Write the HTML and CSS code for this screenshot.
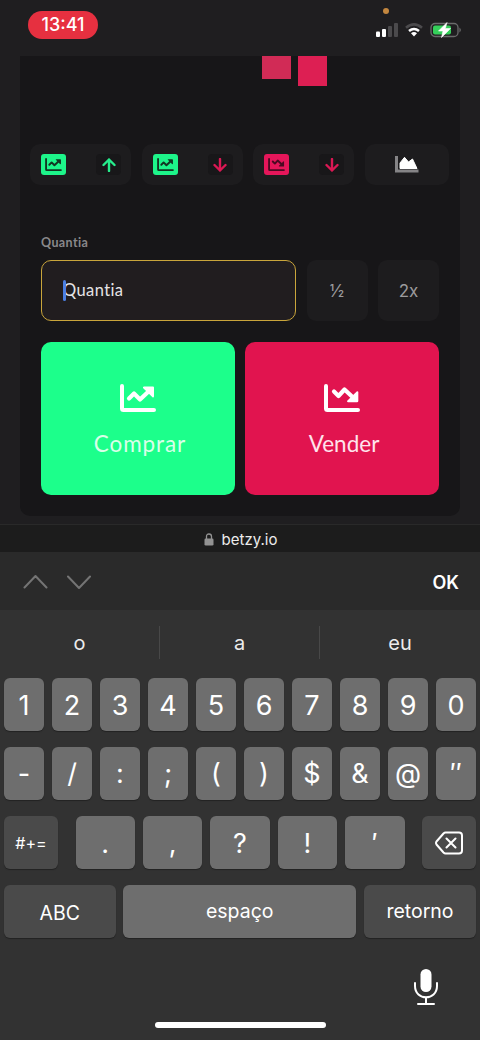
FILE: index.html
```html
<!DOCTYPE html>
<html lang="pt">
<head>
<meta charset="utf-8">
<title>betzy.io</title>
<link rel="stylesheet" href="styles.css">
</head>
<body>
<svg class="defs" aria-hidden="true">
  <symbol id="up" viewBox="0 0 36 28">
    <path d="M2 2V24.5Q2 26 3.500 26H34" fill="none" stroke="currentColor" stroke-width="4" stroke-linecap="round"/>
    <path d="M9 14.500L14 9.500L20 15.500L28 8" fill="none" stroke="currentColor" stroke-width="4.200" stroke-linecap="round" stroke-linejoin="round"/>
    <path d="M24 2.500H33Q34 2.500 34 3.500V12.500Q33.500 14 32.500 13.200L23 4Q22.500 2.800 24 2.500Z" fill="currentColor"/>
  </symbol>
  <symbol id="down" viewBox="0 0 36 28">
    <path d="M2 2V24.500Q2 26 3.500 26H34" fill="none" stroke="currentColor" stroke-width="4" stroke-linecap="round"/>
    <path d="M10 7.500L14.500 12L20.500 5.500L28 12.500" fill="none" stroke="currentColor" stroke-width="4.200" stroke-linecap="round" stroke-linejoin="round"/>
    <path d="M24 18.300H33Q34.300 18.300 34.300 17V8Q34 6.800 32.700 7.500L23.200 16.700Q22.500 18 24 18.300Z" fill="currentColor"/>
  </symbol>
  <symbol id="arrow" viewBox="0 0 14 14">
    <path d="M7 13V1.500M1.500 7L7 1.500L12.500 7" fill="none" stroke="currentColor" stroke-width="2.400" stroke-linecap="round" stroke-linejoin="round"/>
  </symbol>
</svg>

<header class="status">
  <span class="clock">13:41</span>
  <div class="indicators">
    <i class="mic-dot"></i>
    <svg width="22" height="14" viewBox="0 0 22 14"><rect y="8.500" width="4" height="5.500" rx="1" fill="#fff"/><rect x="6" y="6" width="4" height="8" rx="1" fill="#fff"/><rect x="12" y="3" width="4" height="11" rx="1" fill="#4b4a4c"/><rect x="18" width="4" height="14" rx="1" fill="#4b4a4c"/></svg>
    <svg class="wifi" width="18" height="14" viewBox="0 0 18 14" fill="none"><path d="M1 4.800Q9-2 17 4.800" stroke="#4b4a4c" stroke-width="2.600"/><path d="M4 8Q9 4 14 8" stroke="#fff" stroke-width="2.600"/><path d="M6 10.200Q9 8 12 10.200L9 13.500Z" fill="#fff"/></svg>
    <svg class="battery" width="32" height="16" viewBox="0 0 32 16"><rect x="1" y="1.500" width="27" height="13" rx="4" fill="none" stroke="#6b6b6c" stroke-width="1.300"/><rect x="3" y="3.500" width="18" height="9" rx="2" fill="#35cf5a"/><path d="M29.500 5.500Q32 8 29.500 10.500Z" fill="#777"/><path d="M17 .5L8.500 9H13L11.500 15.500L20.500 6.500H15.300Z" fill="#fff" stroke="#fff" stroke-width=".6" stroke-linejoin="round"/></svg>
  </div>
</header>

<main class="panel">
  <div class="candles"><i class="candle"></i><i class="candle tall"></i></div>
  <div class="signals">
    <div class="signal green"><span class="badge"><svg><use href="#up"/></svg></span><span class="dir"><svg><use href="#arrow"/></svg></span></div>
    <div class="signal green"><span class="badge"><svg><use href="#up"/></svg></span><span class="dir falling"><svg><use href="#arrow"/></svg></span></div>
    <div class="signal red"><span class="badge"><svg><use href="#down"/></svg></span><span class="dir falling"><svg><use href="#arrow"/></svg></span></div>
    <div class="signal area"><svg width="24" height="19" viewBox="0 0 24 19"><path d="M1.500 1V16H23.500" fill="none" stroke="#858486" stroke-width="3"/><path d="M5 13.500V8L9.500 2.300L13.500 7L17.500 4L22 13.500Z" fill="#fff" stroke="#fff" stroke-linejoin="round"/></svg></div>
  </div>
  <label class="label" for="amount">Quantia</label>
  <div class="amount">
    <div class="field" id="amount"><i class="caret"></i><span>Quantia</span></div>
    <button class="step">½</button>
    <button class="step">2x</button>
  </div>
  <div class="trade">
    <button class="action buy"><svg><use href="#up"/></svg><span>Comprar</span></button>
    <button class="action sell"><svg><use href="#down"/></svg><span>Vender</span></button>
  </div>
</main>

<div class="url">
  <svg width="10" height="13" viewBox="0 0 10 13"><rect x=".5" y="5.500" width="9" height="7" rx="1.300" fill="#929292"/><path d="M2.500 6V3.500Q2.500 1 5 1T7.500 3.500V6" fill="none" stroke="#929292" stroke-width="1.300"/></svg>
  <span>betzy.io</span>
</div>
<div class="toolbar">
  <svg width="68" height="16" viewBox="0 0 68 16" fill="none" stroke="#747474" stroke-width="2" stroke-linecap="round" stroke-linejoin="round"><path d="M1.500 13.500L12.500 2L23.500 13.500M45 2.500L56 14L67 2.500"/></svg>
  <b>OK</b>
</div>

<section class="keyboard">
  <div class="suggestions"><span>o</span><span>a</span><span>eu</span></div>
  <div class="keys">
    <div class="row"><kbd>1</kbd><kbd>2</kbd><kbd>3</kbd><kbd>4</kbd><kbd>5</kbd><kbd>6</kbd><kbd>7</kbd><kbd>8</kbd><kbd>9</kbd><kbd>0</kbd></div>
    <div class="row signs"><kbd>-</kbd><kbd>/</kbd><kbd>:</kbd><kbd>;</kbd><kbd>(</kbd><kbd>)</kbd><kbd>$</kbd><kbd>&amp;</kbd><kbd>@</kbd><kbd>″</kbd></div>
    <div class="row punctuation">
      <kbd class="dark symbols">#+=</kbd>
      <div class="middle"><kbd>.</kbd><kbd>,</kbd><kbd>?</kbd><kbd>!</kbd><kbd>′</kbd></div>
      <kbd class="dark"><svg width="28" height="24" viewBox="0 0 28 24" fill="none" stroke="#fff" stroke-width="2" stroke-linecap="round" stroke-linejoin="round"><path d="M10.500 1.500H24Q27 1.500 27 4.500V19.500Q27 22.500 24 22.500H10.500Q9.500 22.500 8.500 21.500L1.500 13.500Q.5 12 1.500 10.500L8.500 2.500Q9.500 1.500 10.500 1.500ZM11.500 7.500L20.500 16.500M20.500 7.500L11.500 16.500"/></svg></kbd>
    </div>
    <div class="row bottom"><kbd class="dark abc">ABC</kbd><kbd class="word">espaço</kbd><kbd class="dark word">retorno</kbd></div>
  </div>
  <div class="dictation"><svg width="26" height="38" viewBox="0 0 26 38" fill="none" stroke="#fff" stroke-width="2" stroke-linecap="round"><rect x="7.500" y="1" width="11" height="23" rx="5.500" fill="#fff" stroke="none"/><path d="M2 15V18C2 33 24 33 24 18V15M13 30V36M5 36H21"/></svg></div>
  <div class="home"></div>
</section>
</body>
</html>
```
FILE: styles.css
```css
* { box-sizing: border-box; }
body {
  margin: 0;
  width: 480px;
  height: 1040px;
  overflow: hidden;
  background: #1f1e20;
  color: #fff;
  font-family: Inter, "Liberation Sans", sans-serif;
}
svg { display: block; flex: none; }
.defs { position: absolute; width: 0; height: 0; }
button { border: 0; padding: 0; color: inherit; font: inherit; }

.status {
  display: flex;
  justify-content: space-between;
  align-items: flex-start;
  height: 56px;
  padding: 11px 18px 0 28px;
}
.clock {
  width: 70px;
  height: 28px;
  border-radius: 14px;
  background: #e63040;
  font-size: 18px;
  font-weight: 500;
  line-height: 28px;
  text-align: center;
}
.indicators { position: relative; display: flex; align-items: center; padding-top: 11px; }
.mic-dot {
  position: absolute;
  top: -3px;
  left: 7px;
  width: 6px;
  height: 6px;
  border-radius: 50%;
  background: #c3873f;
}
.wifi { margin-left: 7px; }
.battery { margin-left: 7px; }

.panel {
  height: 460px;
  margin: 0 20px;
  padding: 0 21px;
  border-radius: 0 0 10px 10px;
  background: #171618;
  font-family: Lato, sans-serif;
}
.candles { display: flex; gap: 7px; height: 88px; padding-left: 221px; }
.candle { width: 29px; height: 23px; background: #d12b56; }
.candle.tall { height: 30px; background: #dd1f53; }

.signals {
  display: grid;
  grid-template-columns: 101px 101px 101px 84px;
  gap: 10.500px;
  height: 41px;
  margin: 0 -11px;
}
.signal {
  display: flex;
  align-items: center;
  justify-content: space-between;
  padding: 0 10px 0 11px;
  border-radius: 10px;
  background: #1d1c1e;
}
.badge {
  display: grid;
  place-items: center;
  width: 25px;
  height: 21px;
  border-radius: 3px;
  color: #123522;
}
.badge svg { width: 17px; height: 13px; }
.green .badge { background: #1df58a; }
.red .badge { background: #e5165a; color: #4b0a22; }
.dir {
  display: grid;
  place-items: center;
  width: 25px;
  height: 21px;
  border-radius: 4px;
  background: #181719;
  color: #26ed8c;
}
.dir svg { width: 14px; height: 14px; }
.dir.falling { color: #db1854; }
.falling svg { transform: rotate(180deg); }
.signal.area { justify-content: center; padding: 0; }

.label {
  display: block;
  height: 75px;
  padding-top: 50px;
  color: #89888a;
  font-size: 12.500px;
  font-weight: 700;
  line-height: 16px;
  letter-spacing: 0.400px;
}
.amount {
  display: grid;
  grid-template-columns: 255px 61px 61px;
  gap: 10.500px;
  height: 61px;
}
.field {
  position: relative;
  display: flex;
  align-items: center;
  padding: 0 0 1px 21px;
  border: 1.500px solid #c9a53b;
  border-radius: 10px;
  background: #211d1f;
  color: #e6e4e5;
  font-size: 16.500px;
  letter-spacing: 0.400px;
}
.caret {
  position: absolute;
  left: 21px;
  top: 19px;
  width: 3px;
  height: 21px;
  border-radius: 2px;
  background: #4b7fe3;
}
.step {
  border-radius: 9px;
  background: #1d1c1e;
  color: #9b9a9c;
  font-family: Inter, sans-serif;
  font-size: 17px;
}
.trade { display: grid; grid-template-columns: 1fr 1fr; gap: 10px; margin-top: 21px; }
.action {
  display: flex;
  flex-direction: column;
  align-items: center;
  height: 153px;
  padding-top: 42px;
  border-radius: 10px;
  font-size: 22.500px;
  line-height: 28px;
}
.action svg { width: 36px; height: 28px; }
.action span { margin-top: 18px; }
.buy { background: #1cff8b; }
.buy span { color: #d9ffe9; letter-spacing: 0.900px; margin-left: 4px; }
.sell { background: #e1144f; }
.sell span { color: #ffe3ec; letter-spacing: 0; margin-left: 4px; }

.url {
  display: flex;
  align-items: center;
  justify-content: center;
  gap: 8px;
  height: 28px;
  margin-top: 8px;
  padding: 1px 0 0 1px;
  border-top: 1.500px solid #292929;
  background: #1c1c1c;
  color: #ececec;
  font-size: 15px;
}
.toolbar {
  display: flex;
  align-items: center;
  justify-content: space-between;
  height: 58px;
  padding: 2px 21px 0 23px;
  background: #2a2a2a;
}
.toolbar b { font-size: 18px; font-weight: 600; }

.keyboard { height: 430px; background: #323232; }
.suggestions {
  display: grid;
  grid-template-columns: 159px 160px 161px;
  height: 67.500px;
  padding-top: 16px;
}
.suggestions span {
  height: 33px;
  color: #ececec;
  font-size: 20px;
  line-height: 34px;
  text-align: center;
}
.suggestions span + span { border-left: 1px solid #484848; }
.keys { display: grid; gap: 15.250px; padding: 0 4px; }
.row { display: grid; grid-template-columns: repeat(10, 40px); gap: 8px; height: 53.750px; }
kbd {
  display: grid;
  place-items: center;
  min-width: 0;
  padding-top: 2px;
  border-radius: 6px;
  background: #6e6e6e;
  box-shadow: 0 1px 1px #222;
  font-family: Inter, sans-serif;
  font-size: 27px;
}
.signs kbd { padding-top: 0; }
kbd.dark { background: #4a4a4a; }
.row.punctuation { grid-template-columns: 54px 1fr 54px; gap: 17.500px; }
.middle { display: grid; grid-template-columns: repeat(5, 1fr); gap: 8px; }
kbd.symbols { font-size: 16px; }
.row.bottom { grid-template-columns: 111.500px 233px 112px; gap: 7.750px; }
kbd.abc { padding-top: 4px; font-size: 19.500px; }
kbd.word { padding-bottom: 1px; padding-top: 0; font-size: 19.500px; }
.dictation { display: flex; justify-content: flex-end; height: 84px; padding: 30px 41px 0 0; }
.home { width: 171px; height: 6px; margin: 0 auto; border-radius: 3px; background: #fff; }
```
